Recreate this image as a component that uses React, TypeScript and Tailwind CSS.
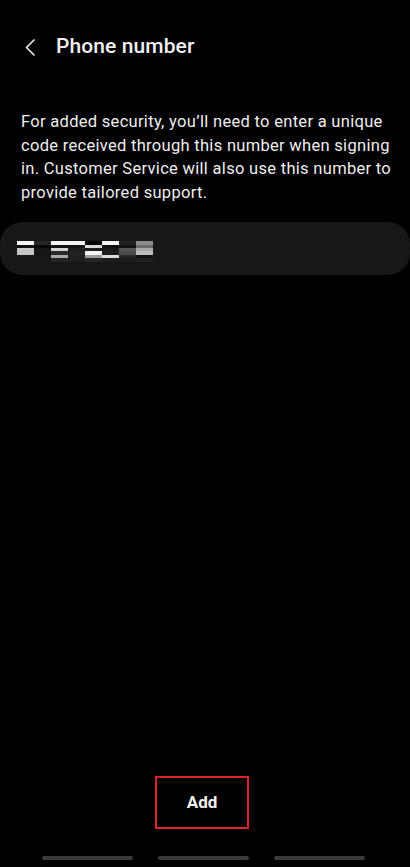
import React from 'react';

// pixelated (redacted) phone number – rows of 17px cells
const mask: { h: number; cells: string[] }[] = [
  { h: 4, cells: ['#f4f4f4', '#262626', '#f4f4f4', '#f4f4f4', '#050505', '#f4f4f4', '#222222', '#8c8c8c'] },
  { h: 3, cells: ['#101010', '#050505', '#161616', '#161616', '#d8d8d8', '#111111', '#111111', '#6a6a6a'] },
  { h: 3, cells: ['#c8c8c8', '#151515', '#d4d4d4', '#1e1e1e', '#1e1e1e', '#1a1a1a', '#555555', '#a8a8a8'] },
  { h: 4, cells: ['#c4c4c4', '#151515', '#2a2a2a', '#222222', '#f4f4f4', '#1d1d1d', '#4a4a4a', '#bdbdbd'] },
  { h: 3, cells: ['#171717', '#171717', '#a8a8a8', '#202020', '#9c9c9c', '#dcdcdc', '#262626', '#101010'] },
  { h: 4, cells: ['#171717', '#171717', '#232323', '#1f1f1f', '#262626', '#1c1c1c', '#1c1c1c', '#202020'] },
];

export default function App() {
  return (
    <div
      className="w-[410px] h-[867px] bg-black text-white flex flex-col overflow-hidden"
      style={{ fontFamily: 'Roboto, "Noto Sans", sans-serif' }}
    >
      {/* header */}
      <div className="flex items-center h-[46px] mt-[24px] pl-[24px]">
        <svg width="12" height="17" viewBox="0 0 12 17" fill="none" className="shrink-0">
          <path d="M10 1L2.5 8.5L10 16" stroke="#e8e8e8" strokeWidth="1.7" strokeLinecap="round" strokeLinejoin="round" />
        </svg>
        <h1 className="ml-[20px] text-[21px] font-medium tracking-[0.1px] text-[#f2f2f2]">Phone number</h1>
      </div>

      {/* description */}
      <p className="mt-[40px] pl-[21px] pr-[14px] text-[16.5px] leading-[23.5px] tracking-[0.3px] text-[#eeeeee]">
        For added security, you’ll need to enter a unique code received through this number when signing in. Customer Service will also use this number to provide tailored support.
      </p>

      {/* phone number row */}
      <div className="mt-[18px] h-[53px] w-[410px] rounded-[22px] bg-[#171717] flex items-center pl-[17px]">
        <div className="flex flex-col mt-[6px]">
          {mask.map((row, i) => (
            <div key={i} className="flex">
              {row.cells.map((c, j) => (
                <div key={j} className="w-[17px]" style={{ height: row.h, backgroundColor: c }} />
              ))}
            </div>
          ))}
        </div>
      </div>

      <div className="flex-1" />

      {/* add button */}
      <div className="flex justify-center pr-[6px]">
        <button className="w-[94px] h-[53px] border-2 border-[#e0202a] flex items-center justify-center text-[17px] font-bold text-[#f2f2f2]">
          Add
        </button>
      </div>

      {/* nav bar */}
      <div className="h-[38px] flex items-center justify-center gap-[25px] pt-[19px] pr-[4px]">
        <div className="w-[91px] h-[4px] rounded-full bg-[#3a3a3a]" />
        <div className="w-[91px] h-[4px] rounded-full bg-[#3a3a3a]" />
        <div className="w-[91px] h-[4px] rounded-full bg-[#3a3a3a]" />
      </div>
    </div>
  );
}
